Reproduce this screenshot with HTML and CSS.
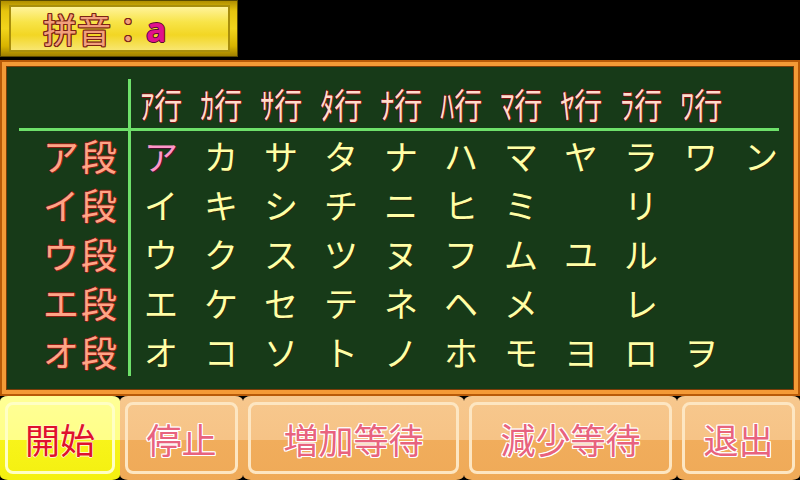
FILE: index.html
```html
<!DOCTYPE html>
<html lang="ja">
<head>
<meta charset="utf-8">
<title>五十音図</title>
<link rel="stylesheet" href="styles.css">
</head>
<body>
<div class="screen">
  <div class="top">
    <div class="banner">
      <div class="banner-panel"><span class="py-label">拼音：</span><span class="py-val">a</span></div>
    </div>
  </div>

  <div class="board">
    <div class="board-inner">
      <div class="row head">
        <div class="label"></div>
        <div class="cols">
          <div class="hd"><span>ｱ行</span></div><div class="hd"><span>ｶ行</span></div><div class="hd"><span>ｻ行</span></div><div class="hd"><span>ﾀ行</span></div><div class="hd"><span>ﾅ行</span></div>
          <div class="hd"><span>ﾊ行</span></div><div class="hd"><span>ﾏ行</span></div><div class="hd"><span>ﾔ行</span></div><div class="hd"><span>ﾗ行</span></div><div class="hd"><span>ﾜ行</span></div>
        </div>
      </div>
      <div class="hline"></div>
      <div class="row">
        <div class="label">ア段</div>
        <div class="cols">
          <div class="kana on">ア</div><div class="kana">カ</div><div class="kana">サ</div><div class="kana">タ</div><div class="kana">ナ</div><div class="kana">ハ</div><div class="kana">マ</div><div class="kana">ヤ</div><div class="kana">ラ</div><div class="kana">ワ</div><div class="kana">ン</div>
        </div>
      </div>
      <div class="row">
        <div class="label">イ段</div>
        <div class="cols">
          <div class="kana">イ</div><div class="kana">キ</div><div class="kana">シ</div><div class="kana">チ</div><div class="kana">ニ</div><div class="kana">ヒ</div><div class="kana">ミ</div><div class="kana"></div><div class="kana">リ</div><div class="kana"></div><div class="kana"></div>
        </div>
      </div>
      <div class="row">
        <div class="label">ウ段</div>
        <div class="cols">
          <div class="kana">ウ</div><div class="kana">ク</div><div class="kana">ス</div><div class="kana">ツ</div><div class="kana">ヌ</div><div class="kana">フ</div><div class="kana">ム</div><div class="kana">ユ</div><div class="kana">ル</div><div class="kana"></div><div class="kana"></div>
        </div>
      </div>
      <div class="row">
        <div class="label">エ段</div>
        <div class="cols">
          <div class="kana">エ</div><div class="kana">ケ</div><div class="kana">セ</div><div class="kana">テ</div><div class="kana">ネ</div><div class="kana">ヘ</div><div class="kana">メ</div><div class="kana"></div><div class="kana">レ</div><div class="kana"></div><div class="kana"></div>
        </div>
      </div>
      <div class="row">
        <div class="label">オ段</div>
        <div class="cols">
          <div class="kana">オ</div><div class="kana">コ</div><div class="kana">ソ</div><div class="kana">ト</div><div class="kana">ノ</div><div class="kana">ホ</div><div class="kana">モ</div><div class="kana">ヨ</div><div class="kana">ロ</div><div class="kana">ヲ</div><div class="kana"></div>
        </div>
      </div>
    </div>
  </div>

  <div class="buttons">
    <div class="btn active w-start"><div class="btn-frame">開始</div></div>
    <div class="btn w-stop"><div class="btn-frame">停止</div></div>
    <div class="btn w-inc"><div class="btn-frame">増加等待</div></div>
    <div class="btn w-dec"><div class="btn-frame">減少等待</div></div>
    <div class="btn w-exit"><div class="btn-frame">退出</div></div>
  </div>
</div>
</body>
</html>
```

FILE: styles.css
```css
html, body {
  margin: 0;
  padding: 0;
  background: #000;
}

.screen {
  width: 800px;
  height: 480px;
  background: #000;
  display: flex;
  flex-direction: column;
  font-family: "Noto Sans CJK JP", sans-serif;
  overflow: hidden;
}

/* ---------- title banner ---------- */
.top {
  height: 60px;
  display: flex;
  align-items: flex-start;
}

.banner {
  box-sizing: border-box;
  width: 238px;
  height: 57px;
  border: 1px solid #5a4a00;
  background: linear-gradient(#b08e00, #e6c40e 18%, #f2d41c 50%, #d8b400 82%, #a08000);
  display: flex;
  padding: 4px 7px 4px 8px;
}

.banner-panel {
  flex: 1;
  border: 2px solid #a88e0c;
  background: linear-gradient(#fff39a, #f8e448 35%, #f2d624 65%, #f8e670);
  display: flex;
  align-items: center;
  padding-left: 32px;
  font-size: 34px;
  line-height: 1;
}

.py-label {
  font-family: "Noto Sans CJK SC", sans-serif;
  color: #f2a07c;
  text-shadow: 1px 0 #7a2414, -1px 0 #7a2414, 0 1px #7a2414, 0 -1px #7a2414,
               1px 1px #7a2414, -1px -1px #7a2414, 1px -1px #7a2414, -1px 1px #7a2414;
}

.py-val {
  font-family: "Noto Sans", sans-serif;
  font-weight: 700;
  color: #e0128c;
  margin-left: 1px;
  text-shadow: 1px 0 #5a0a30, -1px 0 #5a0a30, 0 1px #5a0a30, 0 -1px #5a0a30;
}

/* ---------- chalk board ---------- */
.board {
  height: 336px;
  box-sizing: border-box;
  border: 2px solid #b85a08;
  background: #f49a36;
  padding: 4px;
  display: flex;
}

.board-inner {
  flex: 1;
  border: 1px solid #7a3c08;
  background: #173a18;
  padding-top: 12px;
  display: flex;
  flex-direction: column;
}

.row {
  display: flex;
  height: 49px;
}

.label {
  width: 112px;
  padding-right: 9px;
  text-align: right;
  font-size: 36px;
  letter-spacing: 2px;
  line-height: 49px;
  color: #ffa486;
  text-shadow: 1px 0 #8a1c12, -1px 0 #8a1c12, 0 1px #8a1c12, 0 -1px #8a1c12;
}

.cols {
  display: flex;
  border-left: 3px solid #6ee06a;
}

.hd {
  width: 60px;
  display: flex;
  justify-content: center;
  align-items: center;
}

.hd span {
  display: inline-block;
  font-size: 35px;
  line-height: 1;
  transform: scaleX(0.8);
  color: #ffdccc;
  text-shadow: 1px 0 #7a1010, -1px 0 #7a1010, 0 1px #7a1010, 0 -1px #7a1010;
  white-space: nowrap;
}

.hline {
  height: 3px;
  width: 760px;
  margin-left: 12px;
  background: #6ee06a;
}

.kana {
  width: 60px;
  text-align: center;
  font-size: 34px;
  line-height: 49px;
  color: #ffffa6;
  text-shadow: 1px 1px 0 #2a2a0c;
}

.kana.on {
  color: #ff96c8;
  text-shadow: 1px 1px 0 #4a1030;
}

/* ---------- buttons ---------- */
.buttons {
  flex: 1;
  display: flex;
}

.btn {
  box-sizing: border-box;
  height: 84px;
  padding: 6px 5px 6px;
  border-radius: 8px / 5px;
  background: linear-gradient(#f7c88e 0, #f6c386 52%, #f1ad5c 52%, #efaa58 100%);
  display: flex;
}

.btn-frame {
  flex: 1;
  border: 3px solid #fde6c2;
  border-radius: 8px;
  display: flex;
  align-items: center;
  justify-content: center;
  font-size: 35px;
  color: #e8637e;
  text-shadow: 1px 0 #fff, -1px 0 #fff, 0 1px #fff, 0 -1px #fff,
               1px 1px #fff, -1px -1px #fff, 1px -1px #fff, -1px 1px #fff;
}

.btn.active {
  background: linear-gradient(#ffff96 0, #ffff88 52%, #f8f41a 52%, #f4f010 100%);
}

.btn.active .btn-frame {
  border-color: #ffffc4;
  color: #e0102e;
  text-shadow: 1px 0 #fff8c0, -1px 0 #fff8c0, 0 1px #fff8c0, 0 -1px #fff8c0;
}

.w-start { width: 120px; }
.w-stop  { width: 123px; }
.w-inc   { width: 221px; }
.w-dec   { width: 213px; }
.w-exit  { width: 123px; }
```
